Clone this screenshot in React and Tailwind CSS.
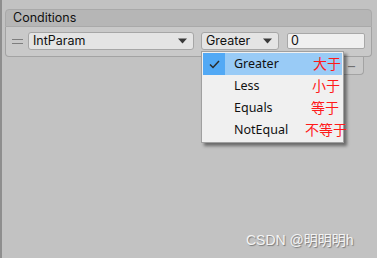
import React from "react";

const items = [
  { name: "Greater", cn: "大于", cnLeft: 311 },
  { name: "Less", cn: "小于", cnLeft: 310 },
  { name: "Equals", cn: "等于", cnLeft: 309 },
  { name: "NotEqual", cn: "不等于", cnLeft: 303 },
];

function Caret() {
  return (
    <svg width="9" height="6" viewBox="0 0 9 6" className="shrink-0">
      <path d="M0 0.5h9L4.5 5.5z" fill="#3a3a3a" />
    </svg>
  );
}

function Popup({ label, className }) {
  return (
    <div
      className={
        "h-[18px] flex items-center justify-between pl-[4px] pr-[6px] rounded-[3px] bg-[#e4e4e4] border border-[#a6a6a6] text-[12.5px] text-[#111] " +
        className
      }
    >
      <span>{label}</span>
      <Caret />
    </div>
  );
}

export default function App() {
  return (
    <div
      className="relative w-[377px] h-[258px] bg-[#c2c2c2] border-l-2 border-[#8e8e8e] overflow-hidden"
      style={{ fontFamily: "Inter, 'Liberation Sans', sans-serif" }}
    >
      {/* reorderable list */}
      <div className="ml-[3px] mt-[9px] w-[367px]">
        <div className="h-[18px] flex items-center pl-[7px] bg-[#b6b6b6] border border-[#a9a9a9] rounded-t-[4px] text-[12.5px] text-[#111]">
          Conditions
        </div>
        <div className="h-[30px] flex items-start pt-[5px] bg-[#c9c9c9] border border-t-0 border-[#a3a3a3] rounded-b-[4px]">
          <div className="w-[22px] flex flex-col items-center gap-[3px] pt-[7px]">
            <div className="w-[11px] h-[1px] bg-[#7e7e7e]" />
            <div className="w-[11px] h-[1px] bg-[#7e7e7e]" />
          </div>
          <Popup label="IntParam" className="w-[166px]" />
          <Popup label="Greater" className="w-[78px] ml-[7px]" />
          <div className="ml-[8px] mt-[1px] w-[78px] h-[16px] flex items-center pl-[3px] bg-[#f0f0f0] border border-[#a8a8a8] rounded-[2px] text-[12.5px] text-[#111]">
            0
          </div>
        </div>
        <div className="flex justify-end pr-[8px]">
          <div className="w-[64px] h-[18px] flex items-center justify-end gap-[10px] pr-[8px] bg-[#c9c9c9] border border-t-0 border-[#a3a3a3] rounded-b-[4px] text-[#707070] text-[14px]">
            <span>+</span>
            <span>–</span>
          </div>
        </div>
      </div>

      {/* dropdown menu */}
      <div
        className="absolute left-[199px] top-[51px] w-[143px] h-[92px] bg-[#f0f0f0] border border-[#a0a0a0] pt-[1px] px-[1px] shadow-[3px_3px_3px_rgba(0,0,0,0.45)]"
        style={{ fontFamily: "'Noto Sans', 'Open Sans', sans-serif" }}
      >
        {items.map((it, i) => (
          <div
            key={it.name}
            className={
              "h-[22px] flex items-center text-[12.5px] text-[#111] " +
              (i === 0 ? "bg-[#99cbf6]" : "")
            }
          >
            <div
              className={
                "w-[22px] h-full flex items-center justify-center " +
                (i === 0 ? "bg-[#52a9f5]" : "")
              }
            >
              {i === 0 && (
                <svg width="11" height="9" viewBox="0 0 11 9">
                  <path d="M1 4.5l3 3L10 1" fill="none" stroke="#2a2a2a" strokeWidth="1.5" />
                </svg>
              )}
            </div>
            <span className="ml-[9px]">{it.name}</span>
          </div>
        ))}
      </div>

      {/* red annotations */}
      {items.map((it, i) => (
        <div
          key={it.cn}
          className="absolute text-[14px] leading-none text-[#ff1a1a]"
          style={{
            left: it.cnLeft,
            top: 56 + i * 22,
            fontFamily: "'Noto Sans CJK SC', sans-serif",
          }}
        >
          {it.cn}
        </div>
      ))}

      {/* watermark */}
      <div
        className="absolute left-[244px] top-[230px] text-[14px] text-[#f4f4f4] [text-shadow:1px_1px_1px_#7a7a7a]"
        style={{ fontFamily: "'Liberation Sans', 'Noto Sans CJK SC', sans-serif" }}
      >
        CSDN @明明明h
      </div>
    </div>
  );
}
